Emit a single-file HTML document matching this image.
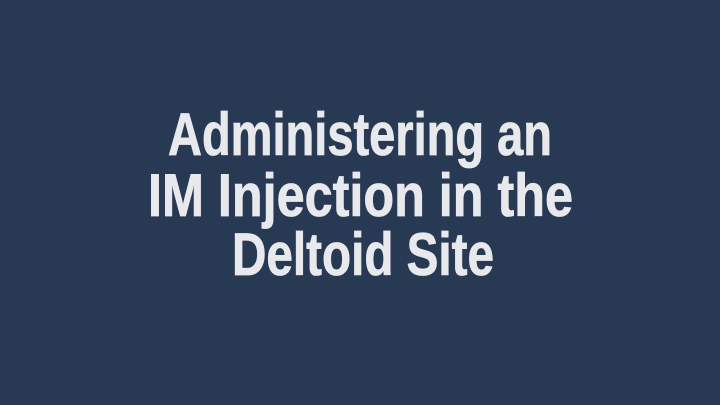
<!DOCTYPE html>
<html><head><meta charset="utf-8"><style>
html,body{margin:0;padding:0;width:720px;height:405px;overflow:hidden;background:#283954;}
svg{display:block}
text{font-family:"Liberation Sans Narrow","Liberation Sans",sans-serif;font-weight:bold;font-size:60px;fill:#e8e9ec;stroke:#e8e9ec;stroke-width:0.8px;}
</style></head><body>
<svg width="720" height="405" viewBox="0 0 720 405">
<rect width="720" height="405" fill="#283954"/>
<text x="168" y="155" textLength="384" lengthAdjust="spacingAndGlyphs">Administering an</text>
<text x="148" y="216" textLength="425" lengthAdjust="spacingAndGlyphs">IM Injection in the</text>
<text x="232" y="275" textLength="262" lengthAdjust="spacingAndGlyphs">Deltoid Site</text>
</svg>
</body></html>
